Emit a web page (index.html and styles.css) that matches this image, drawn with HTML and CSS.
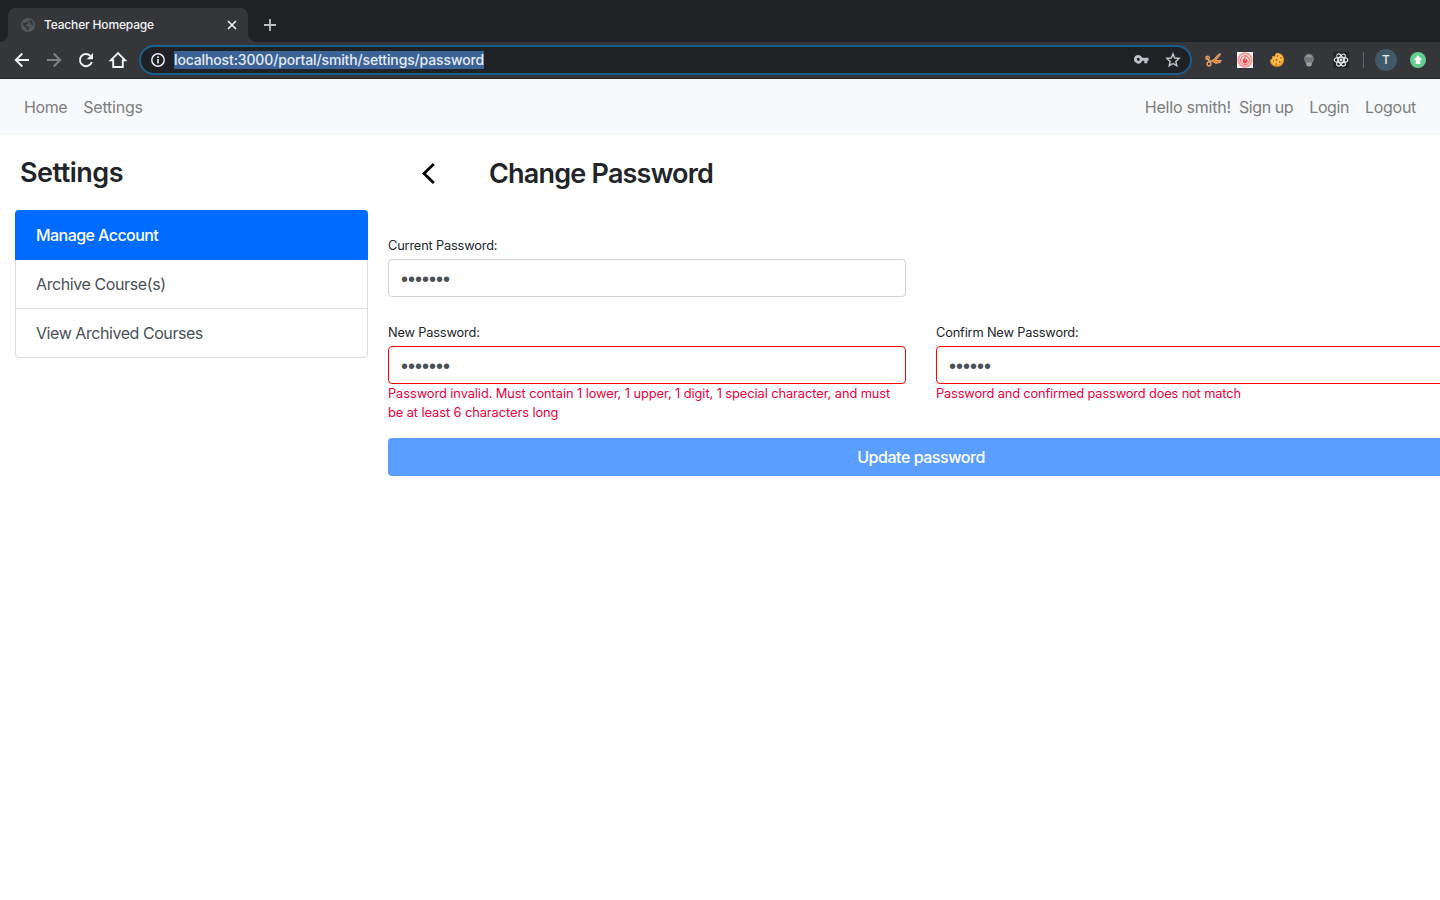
FILE: index.html
```html
<!DOCTYPE html>
<html lang="en">
<head>
<meta charset="utf-8">
<title>Teacher Homepage</title>
<link rel="stylesheet" href="styles.css">
</head>
<body>
<header class="browser">
  <div class="tabstrip">
    <div class="tab">
      <svg class="globe" width="14" height="14" viewBox="0 0 14 14"><circle cx="7" cy="7" r="7" fill="#55575b"/><path d="M2 4.2 4.2 5l2.3-1.6 1.2.8-.8 1.6-2 .9.4 1.3 2.2.4 1 1.4-1.4 2.8-1.3-.3-.4-2.2-1.8-1.2L2 6.5zM8.5 1.8l2.8 1.5 1.2 3.5-1.3.7-1.8-1.3.4-1.7-1.6-.8z" fill="#35363a"/></svg>
      <span class="tab-title">Teacher Homepage</span>
      <svg width="10" height="10" viewBox="0 0 10 10" stroke="#f1f3f4" stroke-width="1.6"><path d="M1 1l8 8M9 1L1 9"/></svg>
    </div>
    <svg class="newtab" width="12" height="12" viewBox="0 0 12 12" stroke="#bdc1c6" stroke-width="1.8"><path d="M6 0v12M0 6h12"/></svg>
  </div>
  <div class="toolbar">
    <div class="nav-icons">
      <svg width="16" height="16" viewBox="0 0 16 16" fill="none" stroke="#f1f3f4" stroke-width="1.9"><path d="M15 8H2M8.3 1.5 1.8 8l6.5 6.5"/></svg>
      <svg width="16" height="16" viewBox="0 0 16 16" fill="none" stroke="#808185" stroke-width="1.9"><path d="M1 8h13M7.7 1.5 14.2 8l-6.5 6.5"/></svg>
      <svg width="16" height="16" viewBox="0 0 16 16" fill="none" stroke="#f1f3f4" stroke-width="1.9"><path d="M13.8 10A6.1 6.1 0 1 1 12.4 3.8"/><path d="M15 1v6.3H8.7z" fill="#f1f3f4" stroke="none"/></svg>
      <svg width="18" height="18" viewBox="0 0 18 18" fill="none" stroke="#f1f3f4" stroke-width="1.9"><path d="M2 9.2h2.2V16h9.6V9.2H16L9 2.2z"/></svg>
    </div>
    <div class="omnibox">
      <svg width="14" height="14" viewBox="0 0 14 14"><circle cx="7" cy="7" r="6.2" fill="none" stroke="#e8eaed" stroke-width="1.5"/><path d="M6.2 6h1.6v4.5H6.2zM6.2 3.3h1.6v1.6H6.2z" fill="#e8eaed"/></svg>
      <span class="url">localhost:3000/portal/smith/settings/password</span>
      <svg class="key" width="15" height="9" viewBox="0 0 15 9" fill="#bdc1c6"><path fill-rule="evenodd" d="M4.3 0a4.3 4.3 0 0 1 4 2.8h6.2v3h-1.2v2.4h-3V5.8h-2A4.3 4.3 0 1 1 4.3 0zm0 2.8a1.5 1.5 0 1 0 0 3 1.5 1.5 0 0 0 0-3z"/></svg>
      <svg class="star" width="16" height="16" viewBox="0 0 16 16" fill="none" stroke="#c7cace" stroke-width="1.4"><path d="M8 1.9 9.7 6l4.5.4-3.4 3 1 4.4L8 11.5l-3.8 2.3 1-4.4-3.4-3L6.3 6z"/></svg>
    </div>
    <div class="extensions">
      <svg width="17" height="16" viewBox="0 0 17 16" fill="none"><path d="M4.5 10.4 9 7.2 13.5 2.2 15.4 1.8 14.6 4 10.4 8.6 16.2 8.3 15.4 10.4 11 11.4 2.5 7.2 2.2 5.4z" fill="#f47b16" stroke="#e0cdbd" stroke-width=".7" stroke-linejoin="round"/><circle cx="2.6" cy="5.9" r="1.7" stroke="#f0985a" stroke-width="1.4"/><circle cx="4" cy="12" r="1.9" stroke="#f0985a" stroke-width="1.5"/></svg>
      <svg width="16" height="16" viewBox="0 0 16 16" fill="none"><path fill="#fff" d="M0 0h16v16H0z"/><circle cx="8" cy="8" r="6.8" stroke="#f49a96" stroke-width="1.8" fill="#fbdad8"/><circle cx="8" cy="8.3" r="4.5" stroke="#eb625e"/><path d="M8.7 3.4c.3 2-3 3-3 5.6 0 1.6 1 2.6 2.4 2.6s2.5-1 2.5-2.5c0-1-.8-1.7-1-2.6-.6.5-1 1.2-.9 2C7.5 7 9.3 5 8.7 3.4z" fill="#e84e4d"/></svg>
      <svg width="16" height="16" viewBox="0 0 16 16"><path d="M7 1.2c4-.8 8 2 8 6.5 0 4-2.8 7.1-7 7.1-4.5 0-7-3-7-6.5L3 6.6l.4-2.5 2 .2z" fill="#ed9b28"/><path d="M7 1.8c3.5-.7 7 1.5 7 5.5 0 3.5-3 5.7-6 5.7-3.5 0-5.5-2-6-5l2-1 .3-2 2 .1z" fill="#f8bd4d"/><g fill="#984b14"><circle cx="8.5" cy="4" r=".8"/><circle cx="12" cy="6" r=".8"/><circle cx="7.5" cy="7.8" r=".9"/><circle cx="4.4" cy="9" r=".7"/><circle cx="10.8" cy="9.8" r=".9"/><circle cx="7.3" cy="12" r=".7"/></g></svg>
      <svg width="16" height="16" viewBox="0 0 16 16"><circle cx="8" cy="7" r="5" fill="#77787a"/><path d="M4 5.3a4.3 4.3 0 0 1 8 0z" fill="#929395"/><path d="M5 10.5h6l-.6 3.2c-1.4.9-3.4.9-4.8 0z" fill="#a0a1a2"/></svg>
      <svg width="16" height="16" viewBox="0 0 16 16" fill="none" stroke="#f1f3f4" stroke-width="1.1"><path fill="#25262a" stroke="none" d="M0 0h16v16H0z"/><ellipse cx="8" cy="8" rx="6.8" ry="2.7"/><ellipse cx="8" cy="8" rx="6.8" ry="2.7" transform="rotate(60 8 8)"/><ellipse cx="8" cy="8" rx="6.8" ry="2.7" transform="rotate(120 8 8)"/><circle cx="8" cy="8" r="1.4" fill="#f1f3f4" stroke="none"/></svg>
    </div>
    <div class="profile">
      <span class="avatar">T</span>
      <svg width="16" height="16" viewBox="0 0 16 16"><circle cx="8" cy="8" r="8" fill="#63cf8f"/><path d="M8 3.3 12.2 8H10.3v4H5.7V8H3.8z" fill="#fff"/></svg>
    </div>
  </div>
</header>
<nav class="navbar">
  <a>Home</a><a class="wide">Settings</a>
  <span class="hello wide">Hello smith!</span><a>Sign up</a><a>Login</a><a class="logout">Logout</a>
</nav>
<div class="layout">
  <aside class="sidebar">
    <h3 class="side-title">Settings</h3>
    <div class="list">
      <a class="item active">Manage Account</a>
      <a class="item">Archive Course(s)</a>
      <a class="item">View Archived Courses</a>
    </div>
  </aside>
  <main class="main">
    <div class="heading">
      <svg width="14" height="22" viewBox="0 0 14 22" fill="none" stroke="#000" stroke-width="2.8"><path d="M12.8 1 3 10.5l9.8 9.5"/></svg>
      <h3 class="title">Change Password</h3>
    </div>
    <form class="form">
      <div class="field">
        <label class="label">Current Password:</label>
        <input class="input" type="password" value="abcdefg">
      </div>
      <div></div>
      <div class="field">
        <label class="label">New Password:</label>
        <input class="input invalid" type="password" value="abcdefg">
        <p class="error">Password invalid. Must contain 1 lower, 1 upper, 1 digit, 1 special character, and must<br>be at least 6 characters long</p>
      </div>
      <div class="field">
        <label class="label">Confirm New Password:</label>
        <input class="input invalid" type="password" value="abcdef">
        <p class="error mismatch">Password and confirmed password does not match</p>
      </div>
      <button class="submit" type="button">Update password</button>
    </form>
  </main>
</div>
</body>
</html>
```
FILE: styles.css
```css
* { box-sizing: border-box; }
body { margin: 0; height: 900px; overflow: hidden; background: #fff; color: #212529; font: 16px/24px Inter, sans-serif; }
svg { display: block; flex: none; }
h3, p { margin: 0; }
span, a, label, h3 { white-space: nowrap; }

.browser { height: 79px; background: #35363a; border-bottom: 1px solid #242528; }
.tabstrip { height: 42px; padding: 8px 0 0 8px; background: #202124; display: flex; }
.tab { position: relative; width: 240px; height: 34px; padding: 0 11px 0 13px; display: flex; align-items: center; gap: 9px; background: #35363a; border-radius: 8px 8px 0 0; }
.tab::before, .tab::after { content: ""; position: absolute; bottom: 0; width: 8px; height: 8px; }
.tab::before { left: -8px; background: radial-gradient(circle at 0 0, #202124 7.5px, #35363a 8px); }
.tab::after { right: -8px; background: radial-gradient(circle at 100% 0, #202124 7.5px, #35363a 8px); }
.tab-title { flex: 1; color: #f1f3f4; font-size: 12px; font-weight: 500; letter-spacing: -0.17px; }
.newtab { margin: 11px 0 0 16px; }
.toolbar { height: 36px; display: flex; align-items: center; padding-left: 14px; }
.nav-icons { width: 125px; display: flex; align-items: center; gap: 16px; }
.nav-icons svg:last-child { margin-left: -1px; }
.omnibox { width: 1053px; height: 30px; padding: 0 9px 0 10px; display: flex; align-items: center; border: 2px solid #1c5f8c; border-radius: 15px; background: #202124; }
.url { margin-left: 9px; height: 18px; line-height: 18px; background: #3b6396; color: #e6ebf2; font-size: 14px; font-weight: 500; letter-spacing: -0.133px; }
.key { margin-left: auto; margin-bottom: 1px; }
.star { margin-left: 16px; }
.extensions { margin-left: 13px; display: flex; gap: 16px; }
.extensions svg:first-child { margin-right: -1px; }
.profile { display: flex; align-items: center; gap: 13px; margin-left: 14px; }
.profile::before { content: ""; width: 1px; height: 16px; background: #626368; margin-right: -2px; }
.avatar { width: 22px; height: 22px; border-radius: 50%; background: #415966; color: #e8eaed; font-size: 12px; font-weight: 500; line-height: 22px; text-align: center; }

.navbar { height: 56px; padding: 0 24px; display: flex; align-items: center; gap: 16px; background: #f8f9fb; color: #7c7d7d; letter-spacing: -0.4px; }
.wide { letter-spacing: -0.22px; }
.hello { margin-left: auto; margin-right: -8px; }
.logout { letter-spacing: -0.3px; }

.layout { display: flex; padding: 0 0 0 15px; }
.sidebar { width: 353px; flex: none; padding-top: 20px; }
.side-title { margin: 0 0 20px 5px; height: 35px; font-size: 27px; font-weight: 600; line-height: 35px; letter-spacing: -0.5px; }
.list { border: 1px solid #dcdddd; border-radius: 4px; }
.item { display: block; height: 49px; padding: 12px 20px; border-bottom: 1px solid #dcdddd; color: #495057; letter-spacing: -0.4px; }
.item:last-child { height: 48px; border-bottom: 0; letter-spacing: -0.44px; }
.active { height: 50px; margin: -1px -1px 0; padding: 13px 21px 12px; border: 0; border-radius: 4px 4px 0 0; background: #006bff; color: #fff; font-weight: 500; letter-spacing: -0.56px; }

.main { width: 1066px; flex: none; margin-left: 20px; }
.heading { height: 77px; padding-left: 33px; display: flex; align-items: center; }
.title { margin-left: 54px; font-size: 27px; font-weight: 600; letter-spacing: -0.8px; }
.form { display: grid; grid-template-columns: 518px 518px; column-gap: 30px; padding-top: 21px; }
.field { padding-bottom: 23px; }
.label { display: block; height: 26px; padding-top: 3px; font-size: 12.8px; line-height: 20px; letter-spacing: -0.17px; }
.input { display: block; width: 100%; height: 38px; padding: 3px 12px 0; border: 1px solid #ced4da; border-radius: 4px; background: #fff; color: #495057; font: 20px "Liberation Sans", sans-serif; outline: 0; }
.invalid { border-color: #f00; }
.error { color: #e6003c; font-size: 12.8px; line-height: 19px; white-space: nowrap; letter-spacing: -0.06px; }
.mismatch { letter-spacing: -0.13px; }
.submit { grid-column: 1 / 3; height: 38px; margin-top: -7px; padding: 0; border: 0; border-radius: 4px; background: #5a9fff; color: #fff; font: 500 16px/36px Inter, sans-serif; letter-spacing: -0.45px; }
```
